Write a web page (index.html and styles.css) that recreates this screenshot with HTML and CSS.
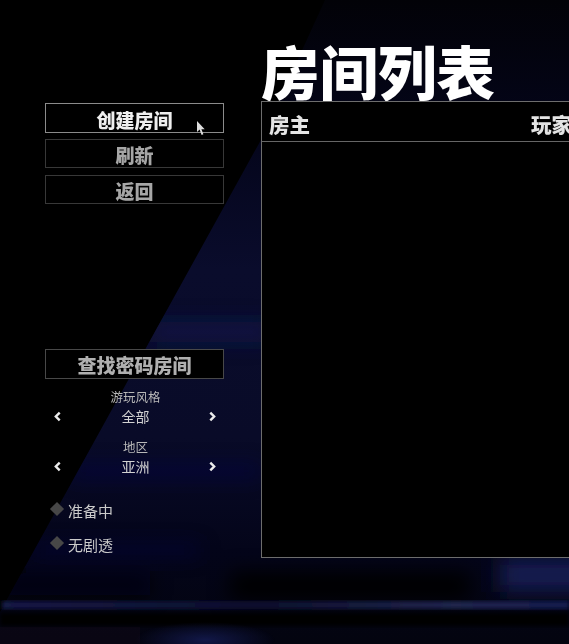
FILE: index.html
```html
<!DOCTYPE html>
<html lang="zh">
<head>
<meta charset="utf-8">
<title>房间列表</title>
<link rel="stylesheet" href="styles.css">
</head>
<body>
<svg class="backdrop" viewBox="0 0 569 644" preserveAspectRatio="none" aria-hidden="true">
  <defs>
    <linearGradient id="wash" x1="0" y1="0" x2="0" y2="1">
      <stop offset="0" stop-color="#020207"/>
      <stop offset="0.2" stop-color="#04051a"/>
      <stop offset="0.42" stop-color="#0a0c2c"/>
      <stop offset="0.68" stop-color="#090b28"/>
      <stop offset="0.85" stop-color="#04051a"/>
      <stop offset="1" stop-color="#03040f"/>
    </linearGradient>
    <linearGradient id="streak" x1="0" y1="0" x2="1" y2="0">
      <stop offset="0" stop-color="#161a48"/>
      <stop offset="0.45" stop-color="#0c0f30"/>
      <stop offset="0.8" stop-color="#202650"/>
      <stop offset="1" stop-color="#161c50"/>
    </linearGradient>
    <radialGradient id="glow">
      <stop offset="0" stop-color="#121848"/>
      <stop offset="1" stop-color="#121848" stop-opacity="0"/>
    </radialGradient>
    <filter id="soft"><feGaussianBlur stdDeviation="2"/></filter>
    <filter id="softer" filterUnits="userSpaceOnUse" x="-60" y="260" width="700" height="400"><feGaussianBlur stdDeviation="10"/></filter>
    <clipPath id="wedge"><path d="M262 138L0 612V644H569V0H325L262 138Z"/></clipPath>
  </defs>
  <g clip-path="url(#wedge)">
    <rect width="569" height="644" fill="url(#wash)"/>
    <g filter="url(#softer)">
      <rect x="150" y="322" width="120" height="20" fill="#141a50" opacity=".7"/>
      <rect x="70" y="465" width="190" height="12" fill="#141850" opacity=".55"/>
      <rect x="30" y="545" width="170" height="10" fill="#141650" opacity=".5"/>
      <rect x="500" y="558" width="100" height="34" fill="#141c56" opacity=".9"/>
      <rect x="230" y="572" width="240" height="28" fill="#010104"/>
      <rect x="0" y="575" width="150" height="20" fill="#020208"/>
    </g>
  </g>
  <rect x="2" y="601" width="567" height="8" fill="url(#streak)" filter="url(#soft)"/>
  <rect x="0" y="613" width="569" height="13" fill="#020206" filter="url(#soft)"/>
  <rect x="0" y="627" width="140" height="17" fill="#130a18" opacity=".4"/>
  <ellipse cx="205" cy="640" rx="70" ry="18" fill="url(#glow)"/>
</svg>

<main class="screen">
  <aside class="side">
    <nav class="menu">
      <button class="btn btn-active" type="button">创建房间</button>
      <button class="btn" type="button">刷新</button>
      <button class="btn" type="button">返回</button>
    </nav>
    <button class="btn btn-search" type="button">查找密码房间</button>
    <section class="picker picker-first">
      <h2 class="picker-label">游玩风格</h2>
      <div class="picker-row">
        <svg class="chev" viewBox="0 0 8 10"><path d="M6 1.5L2.5 5 6 8.5"/></svg>
        <span>全部</span>
        <svg class="chev" viewBox="0 0 8 10"><path d="M2 1.5L5.5 5 2 8.5"/></svg>
      </div>
    </section>
    <section class="picker picker-second">
      <h2 class="picker-label">地区</h2>
      <div class="picker-row">
        <svg class="chev" viewBox="0 0 8 10"><path d="M6 1.5L2.5 5 6 8.5"/></svg>
        <span>亚洲</span>
        <svg class="chev" viewBox="0 0 8 10"><path d="M2 1.5L5.5 5 2 8.5"/></svg>
      </div>
    </section>
    <div class="check check-first"><i class="diamond"></i><span>准备中</span></div>
    <div class="check"><i class="diamond"></i><span>无剧透</span></div>
  </aside>

  <section class="rooms">
    <h1 class="title">房间列表</h1>
    <div class="panel">
      <header class="panel-head">
        <span>房主</span>
        <span class="col-players">玩家</span>
      </header>
    </div>
  </section>
</main>

<svg class="cursor" viewBox="0 0 10 16" aria-hidden="true"><path d="M1 1v11l2.6-2.4L5.6 15l1.8-.8-2-5h3.3L1 1Z"/></svg>
</body>
</html>
```

FILE: styles.css
```css
* { box-sizing: border-box; }

html, body {
  margin: 0;
  height: 100%;
  background: #000;
  overflow: hidden;
}

body {
  position: relative;
  font-family: "Noto Sans CJK SC", "Noto Sans", sans-serif;
  color: #ddd;
}

.backdrop {
  position: absolute;
  inset: 0;
  width: 100%;
  height: 100%;
}

.screen {
  position: relative;
  display: flex;
  width: 569px;
  height: 644px;
  padding-left: 45px;
  overflow: hidden;
}

.side {
  width: 179px;
  flex: none;
  padding-top: 103px;
}

.menu {
  display: flex;
  flex-direction: column;
  gap: 6px;
}

.btn {
  display: block;
  width: 100%;
  height: 29px;
  padding: 2px 0 0 0;
  border: 1px solid #383838;
  background: #000;
  color: #a6a6a6;
  font: 900 19px/26px "Noto Sans CJK SC", sans-serif;
  text-align: center;
}

.btn-active {
  height: 30px;
  padding-top: 3px;
  border-color: #8b8b8b;
  color: #efefef;
}

.menu .btn:last-child {
  margin-top: 1px;
}

.btn-search {
  height: 30px;
  margin-top: 145px;
  border-color: #484848;
  color: #b0b0b0;
}

.picker {
  padding-left: 1px;
  text-align: center;
}

.picker-first {
  margin-top: 9px;
}

.picker-second {
  margin-top: 12px;
}

.picker-label {
  margin: 0;
  padding-left: 1px;
  font-size: 12.5px;
  font-weight: 400;
  line-height: 18px;
  color: #b8b8b8;
}

.picker-row {
  display: flex;
  justify-content: space-between;
  align-items: center;
  height: 20px;
  padding: 0 7px 0 7px;
  font-size: 14px;
  line-height: 20px;
  color: #d2d2d2;
}

.picker-row span {
  padding-left: 1px;
}

.chev {
  width: 9px;
  height: 11px;
  flex: none;
}

.chev path {
  fill: none;
  stroke: #ececec;
  stroke-width: 2.2;
}

.check {
  display: flex;
  align-items: center;
  gap: 6px;
  height: 22px;
  margin-top: 12px;
  padding-left: 7px;
  font-size: 15px;
  line-height: 22px;
  color: #cacaca;
}

.check-first {
  margin-top: 24px;
}

.diamond {
  width: 10px;
  height: 10px;
  margin-top: -4px;
  background: #474747;
  transform: rotate(45deg);
  flex: none;
}

.rooms {
  flex: none;
  width: 308px;
  margin-left: 37px;
  display: flex;
  flex-direction: column;
}

.title {
  margin: 0;
  height: 101px;
  padding-top: 28px;
  font-size: 58.5px;
  font-weight: 900;
  line-height: 84px;
  color: #fff;
  white-space: nowrap;
}

.panel {
  position: relative;
  height: 457px;
  border: 1px solid #6d6d6d;
  border-right: 0;
  background: #000;
}

.panel-head {
  display: flex;
  justify-content: space-between;
  height: 40px;
  padding: 6px 0 0 7px;
  border-bottom: 1px solid #666;
  font-size: 20.5px;
  font-weight: 900;
  line-height: 33px;
  color: #e4e4e4;
  overflow: hidden;
}

.col-players {
  flex: none;
  width: 38px;
  white-space: nowrap;
}

.cursor {
  position: absolute;
  left: 196px;
  top: 120px;
  width: 10px;
  height: 16px;
  fill: #ddd;
}
```
